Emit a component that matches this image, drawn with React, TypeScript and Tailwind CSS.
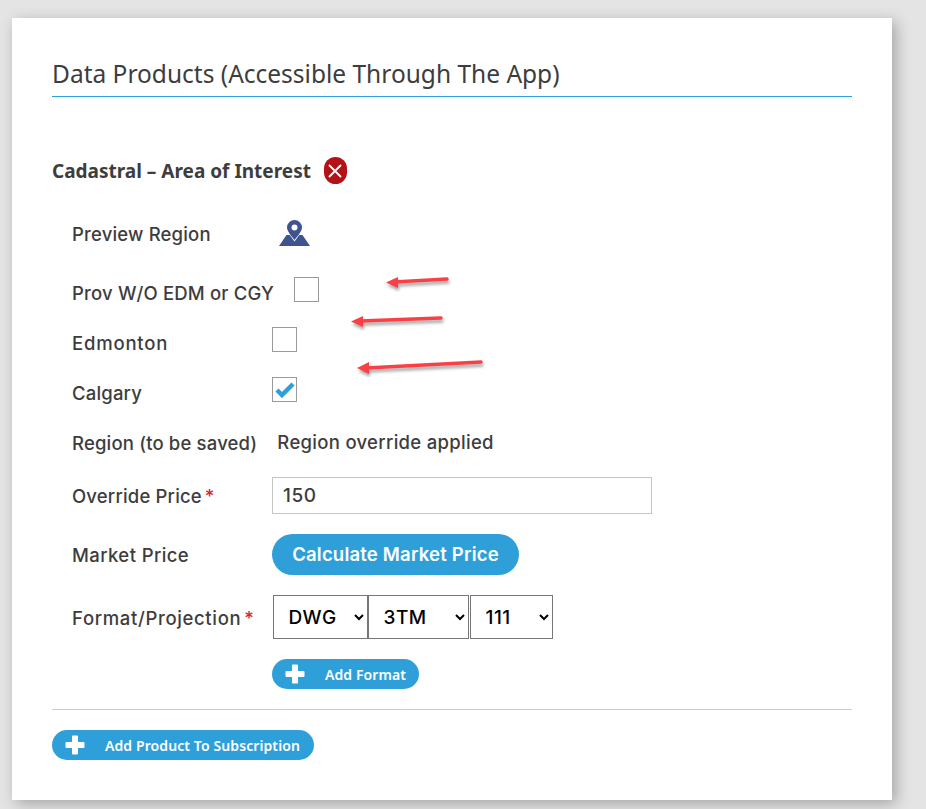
const noto = { fontFamily: '"Noto Sans", sans-serif' };
const inter = { fontFamily: 'Inter, sans-serif' };

function Arrow({ className, width, height, d, head }: { className: string; width: number; height: number; d: string; head: string }) {
  return (
    <svg className={`absolute ${className}`} width={width} height={height} viewBox={`0 0 ${width} ${height}`}>
      <g transform="translate(1 3)" fill="#707070" stroke="#707070" opacity="0.6" className="blur-[1.5px]">
        <path d={d} strokeWidth="3.500" strokeLinecap="round" />
        <path d={head} stroke="none" />
      </g>
      <path d={d} stroke="#fb4045" strokeWidth="3.500" strokeLinecap="round" />
      <path d={head} fill="#fb4045" />
    </svg>
  );
}

function Row({ label, required, className, labelClass = 'tracking-[0.17px]', children }: { label: string; required?: boolean; className: string; labelClass?: string; children?: React.ReactNode }) {
  return (
    <div className={`flex items-center pl-5 ${className}`}>
      <div className={`min-w-[180px] mr-5 text-[18.5px] leading-6 font-medium text-[#3d3d3d] whitespace-nowrap ${labelClass}`} style={inter}>
        {label}
        {required && <span className="text-[#d9232e] ml-[3px]">*</span>}
      </div>
      {children}
    </div>
  );
}

function Checkbox({ checked }: { checked?: boolean }) {
  return (
    <div className="mb-[6px] w-[25px] h-[25px] border border-[#9a9a9a] bg-white flex items-center justify-center">
      {checked && (
        <svg width="20" height="17" viewBox="0 0 20 17">
          <path d="M2 9 L7 14 L18 3" fill="none" stroke="#2f9fda" strokeWidth="4.500" />
        </svg>
      )}
    </div>
  );
}

function Pill({ label, className }: { label: string; className: string }) {
  return (
    <button className={`h-[30px] rounded-full bg-[#2f9fda] flex items-center text-white text-[14px] font-semibold tracking-[0.1px] ${className}`} style={noto}>
      <svg width="20" height="20" viewBox="0 0 20 20">
        <path d="M7 1.500a1 1 0 0 1 1-1h4a1 1 0 0 1 1 1V7h5.500a1 1 0 0 1 1 1v4a1 1 0 0 1-1 1H13v5.500a1 1 0 0 1-1 1H8a1 1 0 0 1-1-1V13H1.500a1 1 0 0 1-1-1V8a1 1 0 0 1 1-1H7Z" fill="white" />
      </svg>
      <span>{label}</span>
    </button>
  );
}

function Select({ value, className }: { value: string; className: string }) {
  return (
    <select
      defaultValue={value}
      className={`h-11 rounded-none border border-[#767676] bg-white text-black text-[19px] tracking-[0.5px] font-medium pl-[11px] ${className}`}
      style={inter}
    >
      <option>{value}</option>
    </select>
  );
}

export default function App() {
  return (
    <div className="relative h-[809px] bg-[#e4e4e4] overflow-hidden" style={noto}>
      <div className="absolute left-3 top-[18px] w-[880px] h-[782px] bg-white px-10 shadow-[4px_4px_14px_rgba(0,0,0,0.28)]">
        <h2 className="mt-10 h-[39px] border-b border-[#2ba3de] text-[24.5px] leading-8 text-[#3d3d3d]">
          Data Products (Accessible Through The App)
        </h2>

        <div className="mt-[60px] flex items-center">
          <span className="text-[19px] leading-6 font-bold text-[#3d3d3d]">Cadastral – Area of Interest</span>
          <span className="ml-[13px] w-[23px] h-[27px] rounded-full bg-[#b31217] flex items-center justify-center">
            <svg width="16" height="16" viewBox="0 0 16 16">
              <path d="M2 2 L14 14 M14 2 L2 14" stroke="white" strokeWidth="1.800" />
            </svg>
          </span>
        </div>

        <Row label="Preview Region" className="mt-[36px] h-7">
          <svg className="ml-[7px] -mt-[2px]" width="31" height="27" viewBox="0 0 31 27">
            <path
              fill="#3f5390"
              fillRule="evenodd"
              d="M15.500 0a7.500 7.500 0 0 1 7.500 7.500c0 3.600-4.500 9-7.500 12.500C12.500 16.500 8 11.100 8 7.500A7.500 7.500 0 0 1 15.500 0Zm0 4.500a3 3 0 1 0 0 6 3 3 0 0 0 0-6Z"
            />
            <path fill="#3f5390" d="M7.500 15h3.200l4.800 6.500 4.800-6.500h3.200L31 26H0Z" />
          </svg>
        </Row>

        <Row label="Prov W/O EDM or CGY" className="mt-[32px] h-[25px]">
          <Checkbox />
        </Row>
        <Row label="Edmonton" labelClass="tracking-[0.8px]" className="mt-[25px] h-[25px]">
          <Checkbox />
        </Row>
        <Row label="Calgary" className="mt-[25px] h-[25px]">
          <Checkbox checked />
        </Row>
        <Row label="Region (to be saved)" className="mt-[25px] h-[25px]">
          <span className="-mt-px text-[18.5px] tracking-[0.3px] leading-6 font-medium text-[#3d3d3d]" style={inter}>Region override applied</span>
        </Row>

        <Row label="Override Price" required className="mt-[22px] h-[37px]">
          <input
            defaultValue="150"
            className="w-[380px] h-[37px] border border-[#c4c4c4] px-[10px] text-[19px] tracking-[0.5px] font-medium text-[#3d3d3d] outline-none"
            style={inter}
          />
        </Row>

        <Row label="Market Price" labelClass="tracking-[0.4px]" className="mt-[20px] h-[41px]">
          <button className="h-[41px] w-[247px] rounded-full bg-[#2f9fda] text-white text-[18.5px] tracking-[0.2px] font-semibold" style={inter}>
            Calculate Market Price
          </button>
        </Row>

        <Row label="Format/Projection" required labelClass="mt-[2px] tracking-[0.65px]" className="mt-5 h-11">
          <div className="flex -ml-[2px]">
            <Select value="DWG" className="w-[95px]" />
            <Select value="3TM" className="w-[101px]" />
            <Select value="111" className="w-[83px] ml-px" />
          </div>
        </Row>

        <div className="mt-[20px] ml-[220px]">
          <Pill label="Add Format" className="w-[147px] pl-[13px] gap-[20px]" />
        </div>

        <div className="mt-5 border-t border-[#cccccc]" />

        <Pill label="Add Product To Subscription" className="mt-5 w-[262px] pl-[13px] gap-[20px]" />
      </div>

      <Arrow className="left-[384px] top-[274px]" width={68} height={18} d="M10 8 L63 5" head="M2 8.500 L14 3 L14 14 Z" />
      <Arrow className="left-[350px] top-[313px]" width={96} height={18} d="M10 8 L91 5" head="M1 8.500 L13 3 L13 14 Z" />
      <Arrow className="left-[356px] top-[357px]" width={130} height={20} d="M10 11 L125 5" head="M1 11 L13 5 L13 17 Z" />
    </div>
  );
}
